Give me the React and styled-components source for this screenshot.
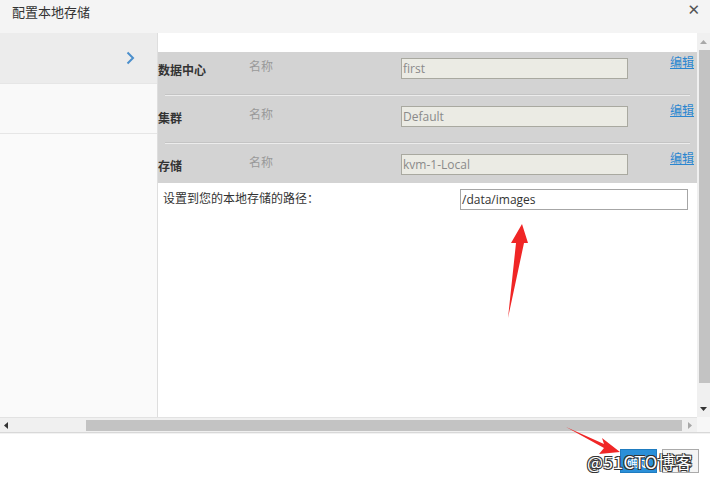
import React from "react";
import styled, { createGlobalStyle } from "styled-components";

const Global = createGlobalStyle`
  html, body { margin: 0; padding: 0; background: #fff; }
  body { font-family: "Noto Sans CJK SC", "Noto Sans", sans-serif; font-size: 12px; color: #333; }
`;

const Dialog = styled.div`
  position: relative;
  width: 710px;
  height: 482px;
  display: flex;
  flex-direction: column;
  background: #fff;
  overflow: hidden;
`;

const Header = styled.div`
  height: 33px;
  flex: none;
  display: flex;
  align-items: flex-start;
  justify-content: space-between;
  background: #f4f4f4;
  padding: 0 12px;
`;

const Title = styled.div`
  font-size: 13px;
  line-height: 16px;
  margin-top: 4px;
  color: #333;
`;

const Close = styled.div`
  font-family: "DejaVu Sans", sans-serif;
  font-size: 15px;
  line-height: 16px;
  margin-top: 2px;
  margin-right: -2px;
  color: #555;
`;

const Body = styled.div`
  flex: none;
  display: grid;
  grid-template-columns: 697px 13px;
  grid-template-rows: 384px 15px;
  border-bottom: 1px solid #d8d8d8;
`;

const Viewport = styled.div`
  display: flex;
  overflow: hidden;
`;

const Side = styled.div`
  width: 157px;
  flex: none;
  background: #fafafa;
  border-right: 1px solid #dedede;
  display: flex;
  flex-direction: column;
`;

const SideItem = styled.div`
  height: ${(p) => p.$h}px;
  background: ${(p) => (p.$active ? "#ececec" : "#f9f9f9")};
  border-bottom: 1px solid #e6e6e6;
  display: flex;
  align-items: center;
  justify-content: flex-end;
  padding-right: 22px;
`;

const Main = styled.div`
  flex: 1;
  display: flex;
  flex-direction: column;
  background: #fff;
  padding-top: 19px;
`;

const Band = styled.div`
  background: #d3d3d3;
  display: flex;
  flex-direction: column;
`;

const Row = styled.div`
  height: ${(p) => p.$h}px;
  display: flex;
  align-items: flex-start;
`;

const Sep = styled.div`
  height: 6px;
  display: flex;
  flex-direction: column;
  padding: 0 7px;
  &::before {
    content: "";
    height: 1px;
    background: #c4c4c4;
  }
  &::after {
    content: "";
    height: 1px;
    background: #ececec;
  }
`;

const Label = styled.div`
  width: 91px;
  flex: none;
  font-weight: bold;
  line-height: 16px;
  margin-top: 10px;
  color: #333;
`;

const Caption = styled.div`
  width: 152px;
  flex: none;
  line-height: 16px;
  margin-top: 6px;
  color: #999;
`;

const Field = styled.div`
  width: ${(p) => p.$w}px;
  height: 21px;
  box-sizing: border-box;
  flex: none;
  margin-top: ${(p) => (p.$flush ? 0 : 6)}px;
  border: 1px solid ${(p) => (p.$disabled ? "#a9a9a0" : "#a6a6a6")};
  background: ${(p) => (p.$disabled ? "#ebebe4" : "#fff")};
  color: ${(p) => (p.$disabled ? "#8a8a8a" : "#333")};
  font-family: "Open Sans", "Noto Sans", sans-serif;
  font-size: 12px;
  line-height: 19px;
  padding-left: 1px;
  white-space: nowrap;
`;

const Edit = styled.a`
  margin-left: 42px;
  margin-top: 2px;
  line-height: 16px;
  color: #2a86d0;
  text-decoration: underline;
  cursor: pointer;
`;

const PathRow = styled.div`
  display: flex;
  align-items: flex-start;
  padding-left: 5px;
  padding-top: 6px;
`;

const PathLabel = styled.div`
  width: 297px;
  flex: none;
  line-height: 16px;
  margin-top: 1px;
  color: #333;
`;

const VScroll = styled.div`
  background: #f0f0f0;
  display: flex;
  flex-direction: column;
  align-items: center;
`;

const HScroll = styled.div`
  background: #f0f0f0;
  display: flex;
  align-items: center;
  border-top: 1px solid #e2e2e2;
`;

const ArrowBox = styled.div`
  width: ${(p) => p.$w}px;
  height: ${(p) => p.$h}px;
  flex: none;
  display: flex;
  align-items: center;
  justify-content: center;
`;

const Spacer = styled.div`
  flex: 1;
`;

const VThumb = styled.div`
  width: 11px;
  margin-left: 2px;
  height: 333px;
  background: #c3c3c3;
`;

const HTrack = styled.div`
  width: 75px;
  flex: none;
  height: 100%;
`;

const HThumb = styled.div`
  width: 596px;
  height: 11px;
  flex: none;
  background: #c3c3c3;
`;

const Corner = styled.div`
  background: #f7f7f7;
`;

const Footer = styled.div`
  flex: 1;
  display: flex;
  justify-content: flex-end;
  align-items: flex-start;
  gap: 5px;
  padding: 15px 11px 0 0;
  border-top: 1px solid #f2f2f2;
`;

const Button = styled.div`
  width: 37px;
  height: 24px;
  box-sizing: border-box;
  display: flex;
  align-items: center;
  justify-content: center;
  font-size: 12px;
  background: ${(p) => (p.$primary ? "#2a8fd8" : "#f4f4f4")};
  color: ${(p) => (p.$primary ? "#fff" : "#333")};
  border: 1px solid ${(p) => (p.$primary ? "#1f7cc0" : "#aaa")};
`;

const Overlay = styled.svg`
  position: absolute;
  left: 0;
  top: 0;
  pointer-events: none;
`;

const Watermark = styled.div`
  position: absolute;
  left: 587px;
  top: 451px;
  font-family: "Noto Sans CJK SC", "Liberation Sans", sans-serif;
  font-size: 17px;
  line-height: 22px;
  letter-spacing: 0.5px;
  color: #fff;
  text-shadow: -1px -1px 0 #333, 1px -1px 0 #333, -1px 1px 0 #333, 1px 1px 0 #333;
  white-space: nowrap;
`;

const rows = [
  { label: "数据中心", value: "first", h: 42 },
  { label: "集群", value: "Default", h: 42 },
  { label: "存储", value: "kvm-1-Local", h: 35 },
];

export default function App() {
  return (
    <>
      <Global />
      <Dialog>
        <Header>
          <Title>配置本地存储</Title>
          <Close>✕</Close>
        </Header>
        <Body>
          <Viewport>
            <Side>
              <SideItem $active $h={50}>
                <svg width="9" height="14" viewBox="0 0 9 14">
                  <polyline points="1.5,1.5 7,7 1.5,12.5" fill="none" stroke="#4b8fcc" strokeWidth="2" />
                </svg>
              </SideItem>
              <SideItem $h={49} />
            </Side>
            <Main>
              <Band>
                {rows.map((r, i) => (
                  <React.Fragment key={r.label}>
                    {i > 0 && <Sep />}
                    <Row $h={r.h}>
                      <Label>{r.label}</Label>
                      <Caption>名称</Caption>
                      <Field $disabled $w={227}>{r.value}</Field>
                      <Edit>编辑</Edit>
                    </Row>
                  </React.Fragment>
                ))}
              </Band>
              <PathRow>
                <PathLabel>设置到您的本地存储的路径：</PathLabel>
                <Field $flush $w={228}>/data/images</Field>
              </PathRow>
            </Main>
          </Viewport>
          <VScroll>
            <ArrowBox $w={13} $h={17}>
              <svg width="7" height="4" viewBox="0 0 7 4"><polygon points="0,4 7,4 3.5,0" fill="#a8a8a8" /></svg>
            </ArrowBox>
            <VThumb />
            <Spacer />
            <ArrowBox $w={13} $h={17}>
              <svg width="7" height="4" viewBox="0 0 7 4"><polygon points="0,0 7,0 3.5,4" fill="#333" /></svg>
            </ArrowBox>
          </VScroll>
          <HScroll>
            <ArrowBox $w={11} $h={14}>
              <svg width="4" height="7" viewBox="0 0 4 7"><polygon points="4,0 4,7 0,3.5" fill="#333" /></svg>
            </ArrowBox>
            <HTrack />
            <HThumb />
            <Spacer />
            <ArrowBox $w={14} $h={14}>
              <svg width="4" height="7" viewBox="0 0 4 7"><polygon points="0,0 0,7 4,3.5" fill="#a8a8a8" /></svg>
            </ArrowBox>
          </HScroll>
          <Corner />
        </Body>
        <Footer>
          <Button $primary>确定</Button>
          <Button>取消</Button>
        </Footer>
        <Overlay width="710" height="482" viewBox="0 0 710 482">
          <polygon points="508,318 516,243 511,243 522,224 528,243 524,243" fill="#f02626" />
          <polygon points="566,427 604,444 602,438 620,452 599,454 604,448" fill="#f02626" />
        </Overlay>
        <Watermark>@51CTO博客</Watermark>
      </Dialog>
    </>
  );
}
